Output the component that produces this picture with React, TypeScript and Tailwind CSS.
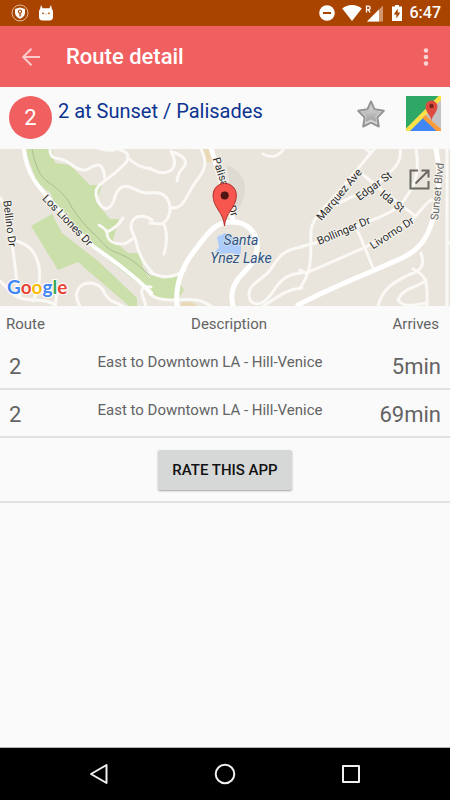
import React from "react";

const arrivals = [
  { route: "2", description: "East to Downtown LA - Hill-Venice", arrives: "5min" },
  { route: "2", description: "East to Downtown LA - Hill-Venice", arrives: "69min" },
];

function StatusBar() {
  return (
    <div className="flex h-[26px] items-center bg-[#a94400] pr-[9px] pl-[11px] text-white">
      <svg width="18" height="18" viewBox="0 0 18 18" className="mr-[9px]" aria-hidden="true">
        <circle cx="9" cy="9" r="8" fill="none" stroke="#e3b896" strokeWidth="1" />
        <path d="M9 3.6 14 5v3.8c0 2.8-2 4.8-5 6-3-1.2-5-3.2-5-6V5z" fill="#fff" />
        <circle cx="9" cy="7.6" r="1.6" fill="none" stroke="#a94400" strokeWidth="1.1" />
        <path d="M9 9v3.4M9 11h1.3" stroke="#a94400" strokeWidth="1.1" />
      </svg>
      <svg width="16" height="18" viewBox="0 0 16 18" aria-hidden="true">
        <path
          d="M3 1l1.600 3.200h6.800L13 1l1 4.200c.7.8 1 1.600 1 2.800v5c0 2.200-1.200 3.500-3.400 3.500H4.400C2.200 16.500 1 15.200 1 13V8c0-1.200.3-2 1-2.800z"
          fill="#fff"
        />
        <circle cx="5" cy="9.300" r=".9" fill="#a94400" />
        <circle cx="11" cy="9.300" r=".9" fill="#a94400" />
        <path d="M6.500 10h3" stroke="#e3b896" strokeWidth=".8" />
      </svg>
      <div className="ml-auto flex items-center">
        <svg width="16" height="16" viewBox="0 0 16 16" className="mr-[7px]" aria-hidden="true">
          <circle cx="8" cy="8" r="7.800" fill="#fff" />
          <rect x="4" y="7" width="8" height="2" fill="#a94400" />
        </svg>
        <svg width="20" height="16" viewBox="0 0 20 16" className="mr-[3px]" aria-hidden="true">
          <path d="M10 16 .2 3.600C2.800 1.400 6.200.1 10 .1s7.200 1.300 9.800 3.500z" fill="#fff" />
        </svg>
        <svg width="19" height="17" viewBox="0 0 19 17" className="mr-2" aria-hidden="true">
          <path d="M18 .5v16H2z" fill="#cf9670" />
          <path d="M14 4.500v12H2z" fill="#fff" />
          <path d="M1.500 7.500V1.200h1.900a1.700 1.700 0 0 1 0 3.500H1.500M3.400 4.700l1.700 2.800" stroke="#fff" strokeWidth="1.300" fill="none" />
        </svg>
        <svg width="10" height="16" viewBox="0 0 10 16" className="mr-2" aria-hidden="true">
          <path d="M3 0h4v1.600h3V16H0V1.600h3z" fill="#fff" />
          <path d="M5.700 3.500 1.800 9.400h2.600v4.200l3.900-6H5.700z" fill="#a94400" />
        </svg>
        <span className="text-[16px] leading-[26px] font-medium">6:47</span>
      </div>
    </div>
  );
}

function AppBar() {
  return (
    <header className="flex h-[61px] items-center bg-[#f06060] pr-[18px] pl-[19px] text-white">
      <button type="button" aria-label="Back" className="flex h-10 w-6 items-center justify-center">
        <svg width="20" height="20" viewBox="0 0 20 20" fill="none" stroke="#fbcaca" strokeWidth="2">
          <path d="M19 10H2.500M10.500 1.700 2.200 10l8.300 8.300" />
        </svg>
      </button>
      <h1 className="ml-[23px] text-[22px] leading-8 font-medium">Route detail</h1>
      <button type="button" aria-label="More options" className="ml-auto flex h-10 w-3 items-center justify-center">
        <svg width="6" height="20" viewBox="0 0 6 20" fill="#fbd3d3">
          <circle cx="3" cy="3.500" r="2.300" />
          <circle cx="3" cy="10" r="2.300" />
          <circle cx="3" cy="16.500" r="2.300" />
        </svg>
      </button>
    </header>
  );
}

function StopHeader() {
  return (
    <section className="flex h-[62px] items-start px-[9px] pt-[9px]">
      <div className="flex h-[43px] w-[43px] shrink-0 items-center justify-center rounded-full bg-[#f06060] text-[22px] text-white">
        2
      </div>
      <h2 className="ml-[6px] text-[20px] leading-[30px] text-[#0d3491]">2 at Sunset / Palisades</h2>
      <button type="button" aria-label="Favorite" className="mt-[3px] ml-auto">
        <svg width="30" height="30" viewBox="0 0 30 30" className="block">
          <defs>
            <linearGradient id="star" x1="0" y1="0" x2="0" y2="1">
              <stop offset="0" stopColor="#dcdcdc" />
              <stop offset="1" stopColor="#9c9c9c" />
            </linearGradient>
          </defs>
          <path
            d="M15 2.500 18.600 10.300l9.200 1.500-6.500 6.700 1.500 9-7.800-3.800-7.800 3.800 1.500-9-6.500-6.700 9.200-1.500z"
            fill="#dedede"
            stroke="#959595"
            strokeWidth="2"
            strokeLinejoin="round"
          />
          <path
            d="M15 6.500 17.600 12l6.200 1-4.400 4.500 1 5.800-5.400-2.700-5.400 2.700 1-5.800L6.200 13l6.200-1z"
            fill="url(#star)"
            stroke="#bdbdbd"
            strokeWidth=".8"
            strokeLinejoin="round"
          />
        </svg>
      </button>
      <button type="button" aria-label="Open in Google Maps" className="ml-5">
        <svg width="35" height="35" viewBox="0 0 35 35" className="block">
          <rect width="35" height="35" fill="#2fa866" />
          <path d="M35 2v33L18 19z" fill="#c3c3c6" />
          <path d="M3 35 18.500 20 34 35z" fill="#4086f4" />
          <path d="M0 32.500 32.500 0H35v4L4 35H0z" fill="#ffe047" />
          <path d="M16.500 22 19.300 19 35 33v2h-4.500z" fill="#ff9c3a" />
          <path d="M25.500 25c-.4-5.500-6-8.500-6-14.500a6 6 0 0 1 12 0c0 6-5.600 9-6 14.500z" fill="#dd4b3e" />
          <circle cx="25.500" cy="10" r="2.200" fill="#7a231c" />
        </svg>
      </button>
    </section>
  );
}

function StopMap() {
  return (
    <section className="relative h-[157px] overflow-hidden bg-[#e9e5dc]" aria-label="Map of the stop">
      <svg viewBox="0 149 450 157" preserveAspectRatio="xMidYMid slice" className="block h-full w-full">
        <rect y="149" width="450" height="157" fill="#e9e5dc" />
        <g fill="#cadfaa">
          <path d="M25 149h27l3 14 15 2 20 20 12 0-6 17 14 17h9l-6 21 15 13h11l5 17 6 9v14l-58-46-30-26-12-29-4-2-10-10z" />
          <path d="M52 214 31 226l27 44 20-8 51 44h8v-8l-39-37-36-28z" />
          <path d="M150 275l15 4 17-8-4 9 6 10-6 9h-18l-10-5z" />
        </g>
        <path d="M32 149c3 14 6 26 16 33s18 14 22 22 15 22 23 29 12 15 22 19 18 7 35 24" fill="none" stroke="#a9bd90" strokeWidth="1" />
        <path d="M227 165c12 5 18 14 18 22 0 11-4 20-12 27z" fill="#dedad2" />
        <path d="M201 149h10l3 13h-8z" fill="#e9d9b4" />
        <path d="M182 302h10l5 4h-16z" fill="#e9d9b4" />
        <path d="M217 237l8-4 6 3 10 4v12l-2 4-7-3-12 1-5-2 4-5z" fill="#adccfb" />

        <g fill="none" stroke="#faf9f5" strokeWidth="3" strokeLinecap="round" strokeLinejoin="round">
          <path d="M50 149c0 8 3 9 10 10 11 2 15 12 25 11 6-1 9-6 14-5 5 2 5 9 6 14" />
          <path d="M117 149c5 1 11 3 11 8 0 6-5 8-11 14-9 9-22 13-21 23 1 8 7 17 12 14 8-4 5-11 9-16 3-5 7-7 13-5 8 3 11 7 20 6" />
          <path d="M98 148c5 2 10 3 16 2M128 158c6 6 13 10 24 11" />
          <path d="M99 225c5 3 8 6 8 8 0 9 9 11 15 11 5 0 8-4 12-6M123 218c-2 3-5 9-16 14" />
          <path d="M152 220c-7-5-15-5-19 0-5 8 1 14 3 21 2 11 7 22 16 31" />
          <path d="M0 198c8 9 9 25 11 39 2 13 4 27 5 38 1 8 1 15 4 20" />
          <path d="M14 240c16 5 21 11 25 26 2 13 0 23-6 35" />
          <path d="M0 281c10 8 12 16 24 18s22-1 32 7M58 288l-3 18" />
          <path d="M80 306c-6-9-4-18 4-22 10-3 18 2 21 10 4 7 10 8 18 12M151 287c-8-1-10 2-9 7l4 12" />
          <path d="M150 168c9 7 21 6 24-2 2-6-1-10-3-15M172 152c10 3 15 7 13 13-2 4-7 5-8 16" />
          <path d="M201 149c7 14 4 21-4 31-7 9-9 17-15 24-4 4-7 4-12 4" />
          <path d="M150 193c12-2 18 4 20 13 1 8-3 17-10 18l-10-1M163 223c5 8 4 22 1 31" />
          <path d="M150 272c10 6 24 7 35-2M150 294c12 10 28 4 47 6 6 1 10 4 14 6" />
          <path d="M263 154c8 5 16 2 20-4" />
          <path d="M302 247c-20 3-23 10-31 22-8 11-22 14-22 25 0 12 11 12 18 5 9-8 11-25 35-26M263 306c12-6 21-17 39-18" />
          <path d="M375 148c-11 13-22 27-35 42-12 15-28 27-29 41-1 23 3 37-11 57M365 148l6 5" />
          <path d="M400 148c3 16-10 24-17 30-12 14-30 16-46 27" />
          <path d="M361 173c15 13 31 25 53 42" />
          <path d="M300 247l15-4 55-22c18-7 28-12 34-21 14-17 15-33 12-52" />
          <path d="M300 271c4 2 6 3 11 0l55-24 44-26c10-6 15-22 28-23" />
          <path d="M355 224l19 46M300 270l7 4" />
          <path d="M447 149v157M447 243h5" />
          <path d="M421 253c4 12 1 18-13 22-13 7-25 12-30 31M413 269c12 6 15 9 14 37M426 280c-8 8-23 7-28 20 6 9 20 4 29 3" />
        </g>
        <g fill="none" stroke="#fff" strokeLinecap="round" strokeLinejoin="round">
          <path d="M24 149c2 24 14 38 29 54 14 15 25 30 40 43 20 15 38 26 58 47" strokeWidth="4" />
          <path d="M211 148l22 72" strokeWidth="5" />
          <path d="M177 306c-2-22 6-41 18-56 13-17 20-28 36-28 18-1 28 14 26 27-1 14-12 21-19 30-7 10-7 18-5 27" strokeWidth="5" />
          <path d="M436 149c4 22 4 37-1 58-4 29-15 42-31 50-34 16-68 28-106 48" strokeWidth="5" />
        </g>

        <g
          fontFamily="Roboto, sans-serif"
          fontSize="11"
          fill="#2b2b2b"
          stroke="#f7f5f0"
          strokeWidth="2"
          strokeLinejoin="round"
          paintOrder="stroke"
          textAnchor="middle"
        >
          <text transform="translate(65 223) rotate(46)">Los Liones Dr</text>
          <text transform="translate(6 224) rotate(83)">Bellino Dr</text>
          <text transform="translate(222 188) rotate(72)">Palisades Dr</text>
          <text transform="translate(342 197) rotate(-50)">Marquez Ave</text>
          <text transform="translate(376 189) rotate(-36)">Edgar St</text>
          <text transform="translate(390 204) rotate(39)">Ida St</text>
          <text transform="translate(345 234) rotate(-23)">Bollinger Dr</text>
          <text transform="translate(394 236) rotate(-33)">Livorno Dr</text>
          <text transform="translate(441 192) rotate(-84)" fill="#666">
            Sunset Blvd
          </text>
        </g>
        <g
          fontFamily="Roboto, sans-serif"
          fontSize="14"
          fontStyle="italic"
          fill="#2f5382"
          stroke="#eef0ee"
          strokeWidth="1"
          paintOrder="stroke"
          textAnchor="middle"
        >
          <text x="241" y="245">Santa</text>
          <text x="241" y="263">Ynez Lake</text>
        </g>

        <path
          d="M224.500 226c-1-14-11.500-18-11.500-31a11.700 11.700 0 0 1 23.400 0c0 13-10.900 17-11.900 31z"
          fill="#f6564d"
          stroke="#b0332d"
          strokeWidth="1"
        />
        <circle cx="224.700" cy="195.500" r="4" fill="#4f1512" />

        <text
          x="7"
          y="294"
          fontFamily="Lato, sans-serif"
          fontSize="19"
          fontWeight="700"
          stroke="#fff"
          strokeWidth="2"
          paintOrder="stroke"
        >
          <tspan fill="#4285f4">G</tspan>
          <tspan fill="#ea4335">o</tspan>
          <tspan fill="#fbbc05">o</tspan>
          <tspan fill="#4285f4">g</tspan>
          <tspan fill="#34a853">l</tspan>
          <tspan fill="#ea4335">e</tspan>
        </text>
      </svg>
      <button type="button" aria-label="Open full map" className="absolute top-5 right-5">
        <svg width="21" height="21" viewBox="0 0 21 21" fill="none" stroke="#6b6964" strokeWidth="2" className="block">
          <path d="M9 1.500H1.500v18h18V12M12.500 1.500h7v7M19 2 6.500 14.500" />
        </svg>
      </button>
    </section>
  );
}

function ArrivalsTable() {
  return (
    <table className="w-full table-fixed border-separate border-spacing-0 text-[#636363]">
      <colgroup>
        <col className="w-[60px]" />
        <col />
        <col className="w-[90px]" />
      </colgroup>
      <thead>
        <tr className="h-9 text-[15px] leading-5">
          <th className="pl-[6px] text-left font-normal">Route</th>
          <th className="pl-[38px] text-center font-normal">Description</th>
          <th className="pr-[11px] text-right font-normal">Arrives</th>
        </tr>
      </thead>
      <tbody>
        {arrivals.map((a) => (
          <tr key={a.arrives} className="h-12">
            <td className="border-b-2 border-[#e2e2e2] pt-[3px] pl-[9px] text-[22px] leading-7">{a.route}</td>
            <td className="border-b-2 border-[#e2e2e2] pt-[10px] text-center align-top text-[15px] leading-5 whitespace-nowrap">
              {a.description}
            </td>
            <td className="border-b-2 border-[#e2e2e2] pt-[3px] pr-[9px] text-right text-[22px] leading-7">{a.arrives}</td>
          </tr>
        ))}
      </tbody>
    </table>
  );
}

function NavigationBar() {
  return (
    <nav className="mt-auto grid h-[53px] grid-cols-3 border-t border-[#b5b5b5] bg-black px-9">
      <button type="button" aria-label="Back" className="flex items-center justify-center">
        <svg width="20" height="22" viewBox="0 0 20 22" fill="none" stroke="#f0f0f0" strokeWidth="2" strokeLinejoin="round">
          <path d="M17.500 2v18L2 11z" />
        </svg>
      </button>
      <button type="button" aria-label="Home" className="flex items-center justify-center">
        <svg width="22" height="22" viewBox="0 0 22 22" fill="none" stroke="#f0f0f0" strokeWidth="2">
          <circle cx="11" cy="11" r="9.300" />
        </svg>
      </button>
      <button type="button" aria-label="Recent apps" className="flex items-center justify-center">
        <svg width="20" height="20" viewBox="0 0 20 20" fill="none" stroke="#f0f0f0" strokeWidth="2" strokeLinejoin="round">
          <rect x="2" y="2" width="16" height="16" />
        </svg>
      </button>
    </nav>
  );
}

export default function App() {
  return (
    <div className="flex min-h-screen flex-col bg-[#fafafa] font-[Roboto,sans-serif]">
      <StatusBar />
      <AppBar />
      <main>
        <StopHeader />
        <StopMap />
        <ArrivalsTable />
        <div className="flex justify-center border-b-2 border-[#e2e2e2] pt-3 pb-[11px]">
          <button
            type="button"
            className="h-10 rounded-[2px] bg-[#d6d8d7] px-[14px] text-[15px] font-medium text-[#111111] shadow-[0_1px_2px_rgba(0,0,0,0.35)]"
          >
            RATE THIS APP
          </button>
        </div>
      </main>
      <NavigationBar />
    </div>
  );
}
